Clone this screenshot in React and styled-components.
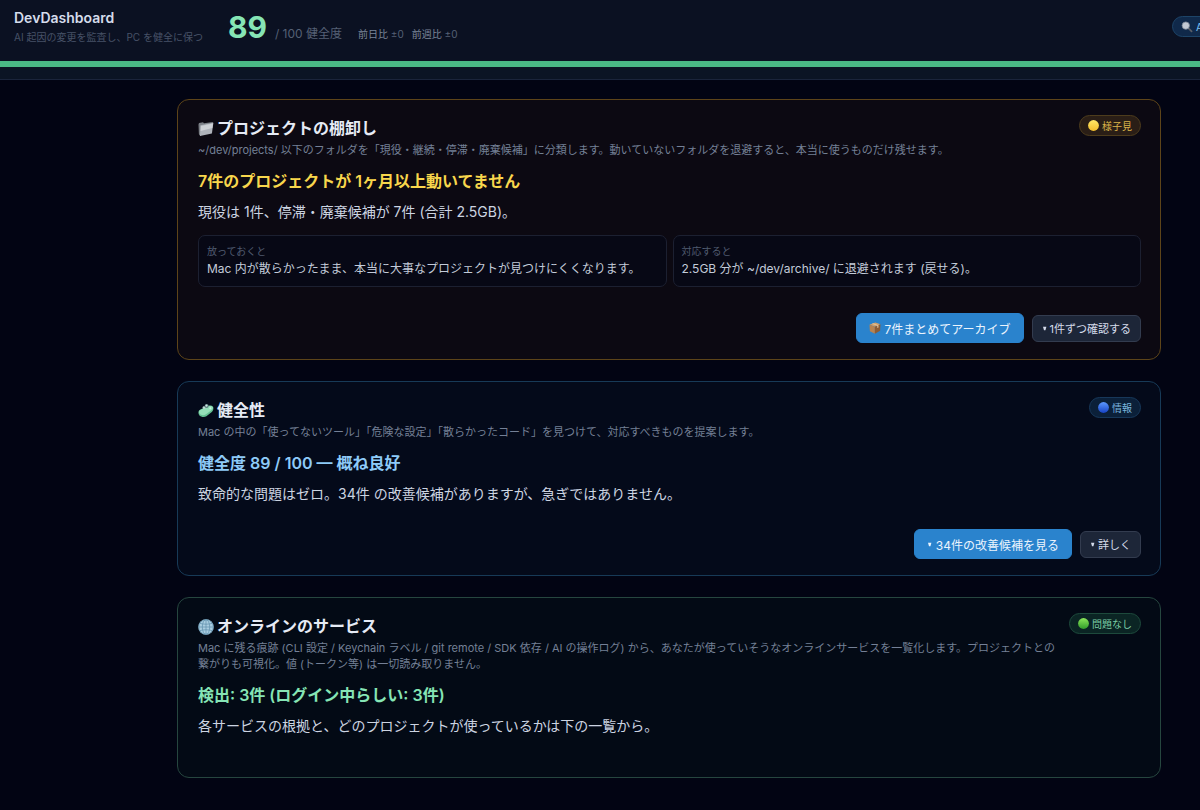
import styled, { createGlobalStyle } from "styled-components";

const GlobalStyle = createGlobalStyle`
  * {
    box-sizing: border-box;
  }

  body {
    margin: 0;
    background-color: #020413;
    color: #e2e8f0;
    font-family: Inter, "Noto Sans CJK JP", sans-serif;
  }

  h1, h2, p {
    margin: 0;
  }
`;

const tones = {
  warn: {
    border: "#5d4419",
    background: "#0c0912",
    headline: "#f8d64c",
    badgeText: "#d9b44a",
    badgeBorder: "#4d3c1c",
    badgeBackground: "#2a1e16",
  },
  info: {
    border: "#173a57",
    background: "#040a1a",
    headline: "#8ecbf8",
    badgeText: "#79b4dc",
    badgeBorder: "#17385a",
    badgeBackground: "#0b2039",
  },
  ok: {
    border: "#26463f",
    background: "#030a15",
    headline: "#86e5b5",
    badgeText: "#7ccda4",
    badgeBorder: "#1d4a3c",
    badgeBackground: "#0b2524",
  },
};

const Header = styled.header`
  background-color: #0b1122;
  border-bottom: 1px solid #1a243b;
`;

const HeaderRow = styled.div`
  display: flex;
  height: 61px;
  padding-left: 14px;
`;

const Brand = styled.div`
  padding-top: 8px;
  margin-right: 25px;
`;

const BrandName = styled.h1`
  font-size: 14px;
  line-height: 20px;
  font-weight: 600;
  color: #d5dceb;
`;

const BrandNote = styled.p`
  font-size: 10px;
  line-height: 18px;
  color: #475267;
`;

const Score = styled.div`
  display: flex;
  align-items: baseline;
  padding-top: 7px;
  font-size: 12px;
  line-height: 40px;
  color: #556075;
`;

const ScoreValue = styled.strong`
  margin-right: 8px;
  font-size: 30px;
  font-weight: 700;
  color: #86e5b5;
`;

const Delta = styled.span`
  margin-left: ${({ $first }) => ($first ? "16px" : "8px")};
  font-size: 10px;
  color: #7b8699;

  span {
    color: #556075;
  }
`;

const HeaderTools = styled.nav`
  flex: 0 0 28px;
  margin-left: auto;
  padding-top: 16px;
  overflow: hidden;
`;

const AskButton = styled.button`
  display: flex;
  align-items: center;
  gap: 3px;
  height: 21px;
  padding: 0 8px;
  border: 1px solid #1d4468;
  border-radius: 11px;
  background-color: #10294a;
  color: #7dc4f5;
  font-family: inherit;
  font-size: 10px;
  white-space: nowrap;

  svg {
    flex: none;
  }
`;

const HealthBar = styled.div`
  height: 18px;
  background-color: #0b1424;
  border-top: 6px solid #4ab985;
`;

const Main = styled.main`
  display: flex;
  flex-direction: column;
  gap: 21px;
  padding: 19px 39px 33px 177px;
`;

const Card = styled.section`
  padding: 15px 19px 16px 20px;
  border: 1px solid ${({ $tone }) => tones[$tone].border};
  border-radius: 12px;
  background-color: ${({ $tone }) => tones[$tone].background};
`;

const CardHead = styled.div`
  display: flex;
  align-items: flex-start;
  justify-content: space-between;
  gap: 12px;
  margin-bottom: 11px;
`;

const CardTitle = styled.h2`
  display: flex;
  align-items: center;
  gap: 3px;
  font-size: 16px;
  line-height: 27px;
  font-weight: 600;
  color: #e6ebf5;
`;

const CardNote = styled.p`
  font-size: 11px;
  line-height: 16px;
  color: #748096;
`;

const Badge = styled.span`
  display: flex;
  flex: none;
  align-items: center;
  gap: 3px;
  height: 21px;
  padding: 0 8px;
  border: 1px solid ${({ $tone }) => tones[$tone].badgeBorder};
  border-radius: 11px;
  background-color: ${({ $tone }) => tones[$tone].badgeBackground};
  color: ${({ $tone }) => tones[$tone].badgeText};
  font-size: 10px;
`;

const Headline = styled.p`
  font-size: 16px;
  line-height: 24px;
  font-weight: 600;
  color: ${({ $tone }) => tones[$tone].headline};
`;

const Summary = styled.p`
  margin-top: 8px;
  font-size: 14px;
  line-height: 22px;
  color: #ccd4e1;
`;

const Effects = styled.div`
  display: grid;
  grid-template-columns: 1fr 1fr;
  gap: 6px;
  margin: 12px 0 26px;
`;

const Effect = styled.div`
  padding: 7px 8px;
  border: 1px solid #1c2031;
  border-radius: 7px;
  background-color: #070815;
`;

const EffectLabel = styled.p`
  font-size: 10px;
  line-height: 16px;
  color: #505b70;
`;

const EffectText = styled.p`
  font-size: 12px;
  line-height: 20px;
  color: #c3cbd9;
`;

const Actions = styled.div`
  display: flex;
  align-items: center;
  justify-content: flex-end;
  gap: 8px;
  margin-top: 24px;
`;

const ActionButton = styled.button`
  display: flex;
  align-items: center;
  gap: ${({ $primary }) => ($primary ? "3px" : "2px")};
  height: ${({ $primary }) => ($primary ? "30px" : "27px")};
  padding: ${({ $primary }) => ($primary ? "0 12px" : "0 9px")};
  border: 1px solid ${({ $primary }) => ($primary ? "#2a83cd" : "#333c4f")};
  border-radius: 6px;
  background-color: ${({ $primary }) => ($primary ? "#2a83cd" : "#1d2638")};
  color: ${({ $primary }) => ($primary ? "#eaf4fd" : "#d5dceb")};
  font-family: inherit;
  font-size: ${({ $primary }) => ($primary ? "12px" : "11px")};
`;

const Caret = () => (
  <svg width="6" height="6" viewBox="0 0 6 6" aria-hidden="true">
    <path d="M1 1.800h3.400L3.400 5.200H2z" fill="currentColor" />
  </svg>
);

const SearchIcon = () => (
  <svg width="12" height="12" viewBox="0 0 12 12" aria-hidden="true">
    <path d="M7.6 7.4l3 3" stroke="#5a5f68" strokeWidth="1.7" strokeLinecap="round" />
    <circle cx="4.8" cy="4.6" r="3.7" fill="#c3cad4" stroke="#7c8795" strokeWidth="0.8" />
  </svg>
);

const FolderIcon = () => (
  <svg width="16" height="16" viewBox="0 0 16 16" aria-hidden="true">
    <path d="M.5 3.400L1 1.900l4-.6 1 .9L15 .9l-.4 2L2.200 15 .9 13.200z" fill="#7c8087" />
    <path d="M2.400 4.300l13-2.500-1.500 10.700L2 15z" fill="#aeb2ba" />
    <path d="M2.900 4.900L15 2.500l-.7 4.600-11.700 3z" fill="#ced1d6" />
  </svg>
);

// tilted green bar with two bubbles on top
const SoapIcon = () => (
  <svg width="16" height="16" viewBox="0 0 16 16" aria-hidden="true">
    <path d="M.4 9.400c0-1.500 1-2.400 2-2.900l7.800-3.700c1.800-.8 4.300-.4 5 1.200.6 1.800-.1 3.900-1.400 4.900l-5.400 4.300c-1.400 1-3.600 1.100-5.200.3C1.400 12.700.4 11.200.4 9.400z" fill="#62bf91" />
    <path d="M.9 8.700c.3-1 1.100-1.500 1.900-1.900l7.600-3.500c1.700-.7 3.900-.3 4.500 1 .4 1.200-.5 2.200-1.500 2.900L8 11.300c-1.400.9-3.500 1.200-5 .5-1.300-.6-2.100-1.800-2.100-3.100z" fill="#94dfb8" />
    <circle cx="6" cy="4.600" r="1.400" fill="#bcd8d2" />
    <circle cx="8.600" cy="3.100" r="2" fill="#5f7f80" />
    <circle cx="8.500" cy="2.600" r="1.100" fill="#cfe5e2" />
    <circle cx="12.300" cy="5.200" r="1" fill="#cdeee0" />
  </svg>
);

const GlobeIcon = () => (
  <svg width="16" height="16" viewBox="0 0 16 16" aria-hidden="true">
    <circle cx="8" cy="8" r="7.700" fill="#a9cde0" />
    <g fill="none" stroke="#5e8fac" strokeWidth="0.700">
      <circle cx="8" cy="8" r="7.300" />
      <ellipse cx="8" cy="8" rx="3.700" ry="7.400" />
      <path d="M8 .6v14.800M.6 8h14.800M1.700 4.300c3.800 1.200 8.800 1.200 12.600 0M1.700 11.700c3.800-1.200 8.800-1.200 12.600 0" />
    </g>
  </svg>
);

const BoxIcon = () => (
  <svg width="12" height="12" viewBox="0 0 12 12" aria-hidden="true">
    <path d="M.5 2.700L6.300.5l5.200 1.800-5.600 2.500z" fill="#d0a06c" />
    <path d="M.5 2.700l5.400 2.100v6.900L.9 9.200z" fill="#b98350" />
    <path d="M11.500 2.300L5.900 4.800v6.900l5.200-3z" fill="#8d5c35" />
    <path d="M2.900 1.800l5.400 1.900v2.400l1.200-.6V3.200L4.200 1.300z" fill="#e3c49c" />
  </svg>
);

const dotColors = {
  warn: ["#ffe867", "#f2bd2c"],
  info: ["#5c98ff", "#1743c4"],
  ok: ["#8be65a", "#319c2b"],
};

const StatusDot = ({ tone }) => (
  <svg width="11" height="11" viewBox="0 0 11 11" aria-hidden="true">
    <defs>
      <linearGradient id={`dot-${tone}`} x1="0" y1="0" x2="0" y2="1">
        <stop offset="0" stopColor={dotColors[tone][0]} />
        <stop offset="1" stopColor={dotColors[tone][1]} />
      </linearGradient>
    </defs>
    <circle cx="5.500" cy="5.500" r="5.400" fill={`url(#dot-${tone})`} />
  </svg>
);

const cards = [
  {
    tone: "warn",
    icon: <FolderIcon />,
    title: "プロジェクトの棚卸し",
    note: "~/dev/projects/ 以下のフォルダを「現役・継続・停滞・廃棄候補」に分類します。動いていないフォルダを退避すると、本当に使うものだけ残せます。",
    badge: "様子見",
    headline: "7件のプロジェクトが 1ヶ月以上動いてません",
    summary: "現役は 1件、停滞・廃棄候補が 7件 (合計 2.5GB)。",
    effects: [
      { label: "放っておくと", text: "Mac 内が散らかったまま、本当に大事なプロジェクトが見つけにくくなります。" },
      { label: "対応すると", text: "2.5GB 分が ~/dev/archive/ に退避されます (戻せる)。" },
    ],
    actions: [
      { label: "7件まとめてアーカイブ", icon: <BoxIcon />, primary: true },
      { label: "1件ずつ確認する", icon: <Caret /> },
    ],
  },
  {
    tone: "info",
    icon: <SoapIcon />,
    title: "健全性",
    note: "Mac の中の「使ってないツール」「危険な設定」「散らかったコード」を見つけて、対応すべきものを提案します。",
    badge: "情報",
    headline: "健全度 89 / 100 — 概ね良好",
    summary: "致命的な問題はゼロ。34件 の改善候補がありますが、急ぎではありません。",
    effects: [],
    actions: [
      { label: "34件の改善候補を見る", icon: <Caret />, primary: true },
      { label: "詳しく", icon: <Caret /> },
    ],
  },
  {
    tone: "ok",
    icon: <GlobeIcon />,
    title: "オンラインのサービス",
    note: "Mac に残る痕跡 (CLI 設定 / Keychain ラベル / git remote / SDK 依存 / AI の操作ログ) から、あなたが使っていそうなオンラインサービスを一覧化します。プロジェクトとの繋がりも可視化。値 (トークン等) は一切読み取りません。",
    badge: "問題なし",
    headline: "検出: 3件 (ログイン中らしい: 3件)",
    summary: "各サービスの根拠と、どのプロジェクトが使っているかは下の一覧から。",
    effects: [],
    actions: [],
  },
];

const StatusCard = ({ card }) => (
  <Card $tone={card.tone}>
    <CardHead>
      <div>
        <CardTitle>
          {card.icon}
          {card.title}
        </CardTitle>
        <CardNote>{card.note}</CardNote>
      </div>
      <Badge $tone={card.tone}>
        <StatusDot tone={card.tone} />
        {card.badge}
      </Badge>
    </CardHead>
    <Headline $tone={card.tone}>{card.headline}</Headline>
    <Summary>{card.summary}</Summary>
    {card.effects.length > 0 && (
      <Effects>
        {card.effects.map((effect) => (
          <Effect key={effect.label}>
            <EffectLabel>{effect.label}</EffectLabel>
            <EffectText>{effect.text}</EffectText>
          </Effect>
        ))}
      </Effects>
    )}
    <Actions>
      {card.actions.map((action) => (
        <ActionButton key={action.label} type="button" $primary={action.primary}>
          {action.icon}
          {action.label}
        </ActionButton>
      ))}
    </Actions>
  </Card>
);

const App = () => (
  <>
    <GlobalStyle />
    <Header>
      <HeaderRow>
        <Brand>
          <BrandName>DevDashboard</BrandName>
          <BrandNote>AI 起因の変更を監査し、PC を健全に保つ</BrandNote>
        </Brand>
        <Score>
          <ScoreValue>89</ScoreValue>
          / 100 健全度
          <Delta $first>
            前日比 <span>±0</span>
          </Delta>
          <Delta>
            前週比 <span>±0</span>
          </Delta>
        </Score>
        <HeaderTools>
          <AskButton type="button">
            <SearchIcon />
            AI
          </AskButton>
        </HeaderTools>
      </HeaderRow>
      <HealthBar />
    </Header>
    <Main>
      {cards.map((card) => (
        <StatusCard key={card.title} card={card} />
      ))}
    </Main>
  </>
);

export default App;
